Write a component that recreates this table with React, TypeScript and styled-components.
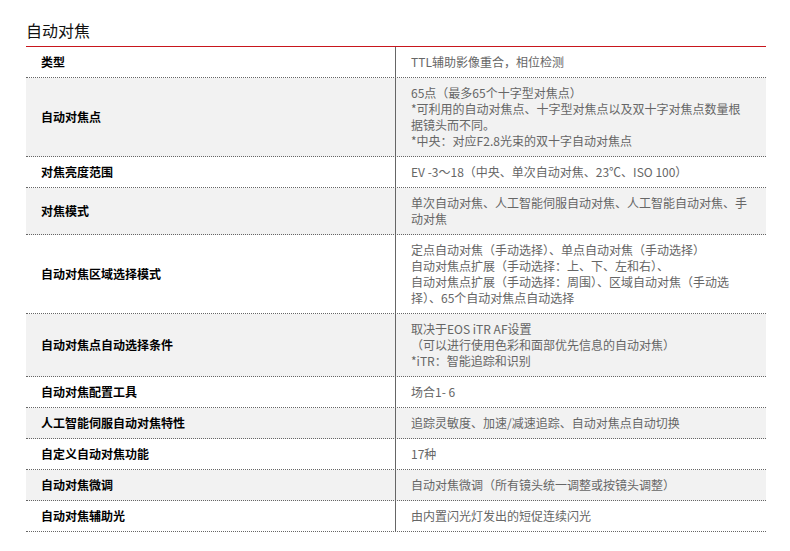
import React from "react";
import styled, { createGlobalStyle } from "styled-components";

const Global = createGlobalStyle`
  html, body { margin: 0; padding: 0; background: #fff; }
  body { font-family: "Microsoft YaHei", "Noto Sans CJK SC", "Noto Sans", sans-serif; }
`;

const Page = styled.div`
  width: 740px;
  padding: 18px 0 0 26px;
`;

const Title = styled.h2`
  margin: 0;
  font-size: 16px;
  font-weight: normal;
  line-height: 24px;
  color: #111;
  padding-bottom: 4px;
  border-bottom: 1px solid #c8161d;
`;

const Table = styled.div`
  display: flex;
  flex-direction: column;
`;

const Row = styled.div<{ $shade: boolean }>`
  display: grid;
  grid-template-columns: 370px 370px;
  background: ${(p) => (p.$shade ? "#f2f2f2" : "#fff")};
  border-bottom: 1px dotted #666;
`;

const Label = styled.div`
  display: flex;
  align-items: center;
  padding: 7px 15px;
  border-right: 1px solid #666;
  font-size: 12px;
  line-height: 16px;
  font-weight: bold;
  color: #000;
`;

const Value = styled.div`
  padding: 7px 15px;
  font-size: 12px;
  line-height: 16px;
  color: #666;
`;

const Line = styled.div``;

const rows: [string, string[]][] = [
  ["类型", ["TTL辅助影像重合，相位检测"]],
  [
    "自动对焦点",
    [
      "65点（最多65个十字型对焦点）",
      "*可利用的自动对焦点、十字型对焦点以及双十字对焦点数量根",
      "据镜头而不同。",
      "*中央：对应F2.8光束的双十字自动对焦点",
    ],
  ],
  ["对焦亮度范围", ["EV -3～18（中央、单次自动对焦、23℃、ISO 100）"]],
  ["对焦模式", ["单次自动对焦、人工智能伺服自动对焦、人工智能自动对焦、手", "动对焦"]],
  [
    "自动对焦区域选择模式",
    [
      "定点自动对焦（手动选择）、单点自动对焦（手动选择）",
      "自动对焦点扩展（手动选择：上、下、左和右）、",
      "自动对焦点扩展（手动选择：周围）、区域自动对焦（手动选",
      "择）、65个自动对焦点自动选择",
    ],
  ],
  [
    "自动对焦点自动选择条件",
    ["取决于EOS iTR AF设置", "（可以进行使用色彩和面部优先信息的自动对焦）", "*iTR：智能追踪和识别"],
  ],
  ["自动对焦配置工具", ["场合1- 6"]],
  ["人工智能伺服自动对焦特性", ["追踪灵敏度、加速/减速追踪、自动对焦点自动切换"]],
  ["自定义自动对焦功能", ["17种"]],
  ["自动对焦微调", ["自动对焦微调（所有镜头统一调整或按镜头调整）"]],
  ["自动对焦辅助光", ["由内置闪光灯发出的短促连续闪光"]],
];

export default function App() {
  return (
    <>
      <Global />
      <Page>
        <Title>自动对焦</Title>
        <Table>
          {rows.map(([label, lines], i) => (
            <Row key={label} $shade={i % 2 === 1}>
              <Label>{label}</Label>
              <Value>
                {lines.map((l, j) => (
                  <Line key={j}>{l}</Line>
                ))}
              </Value>
            </Row>
          ))}
        </Table>
      </Page>
    </>
  );
}
